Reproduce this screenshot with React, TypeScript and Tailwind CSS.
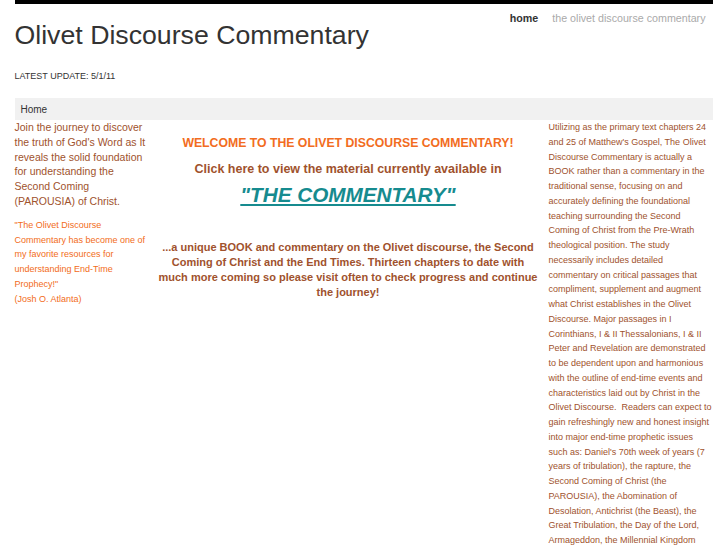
export default function App() {
  return (
    <div className="min-h-[545px] bg-white font-['Liberation_Sans',Arial,sans-serif]">
      <div className="mx-auto w-[698px]">
        <div className="h-[4px] bg-black" />
        <div className="flex items-start justify-between">
          <h1 className="mt-[13px] text-[26.7px] leading-[36px] text-[#333]">Olivet Discourse Commentary</h1>
          <nav className="mt-[7px] mr-[7px] flex gap-[14px] text-[10.7px] leading-[14px]">
            <span className="font-bold text-[#333]">home</span>
            <span className="text-[#aaa]">the olivet discourse commentary</span>
          </nav>
        </div>
        <p className="mt-[17px] text-[9px] leading-[12px] text-[#333]">LATEST UPDATE: 5/1/11</p>
        <div className="mt-[16px] flex h-[22px] items-center bg-[#f1f1f1] px-[6px] text-[10px] text-[#333]">Home</div>
        <div className="flex">
          <div className="w-[136px] shrink-0">
            <p className="text-[10.5px] leading-[14.8px] text-[#a0522d]">
              Join the journey to discover the truth of God's Word as It reveals the solid foundation for understanding the Second Coming (PAROUSIA) of Christ.
            </p>
            <p className="mt-[9px] text-[9px] leading-[14.8px] text-[#f26c21]">
              "The Olivet Discourse Commentary has become one of my favorite resources for understanding End-Time Prophecy!"
              <br />
              (Josh O. Atlanta)
            </p>
          </div>
          <div className="w-[395px] shrink-0 px-[8px] pt-[15px] text-center font-bold">
            <p className="text-[12.25px] leading-[16px] text-[#f26c21]">WELCOME TO THE OLIVET DISCOURSE COMMENTARY!</p>
            <p className="mt-[10px] text-[12.5px] leading-[16px] text-[#a0522d]">Click here to view the material currently available in</p>
            <p className="mt-[5px] text-[20.7px] leading-[26px] italic text-[#168b8f] underline">"THE COMMENTARY"</p>
            <p className="mt-[32px] text-[11px] leading-[15px] text-[#a0522d]">
              ...a unique BOOK and commentary on the Olivet discourse, the Second Coming of Christ and the End Times. Thirteen chapters to date with much more coming so please visit often to check progress and continue the journey!
            </p>
          </div>
          <div className="ml-[3px] w-[164px] shrink-0">
            <p className="text-[9px] leading-[14.75px] text-[#a0522d]">
              Utilizing as the primary text chapters 24 and 25 of Matthew's Gospel, The Olivet Discourse Commentary is actually a BOOK rather than a commentary in the traditional sense, focusing on and accurately defining the foundational teaching surrounding the Second Coming of Christ from the Pre-Wrath theological position. The study necessarily includes detailed commentary on critical passages that compliment, supplement and augment what Christ establishes in the Olivet Discourse. Major passages in I Corinthians, I &amp; II Thessalonians, I &amp; II Peter and Revelation are demonstrated to be dependent upon and harmonious with the outline of end-time events and characteristics laid out by Christ in the Olivet Discourse.&nbsp; Readers can expect to gain refreshingly new and honest insight into major end-time prophetic issues such as: Daniel's 70th week of years (7 years of tribulation), the rapture, the Second Coming of Christ (the PAROUSIA), the Abomination of Desolation, Antichrist (the Beast), the Great Tribulation, the Day of the Lord, Armageddon, the Millennial Kingdom and much more.
            </p>
          </div>
        </div>
      </div>
    </div>
  );
}
